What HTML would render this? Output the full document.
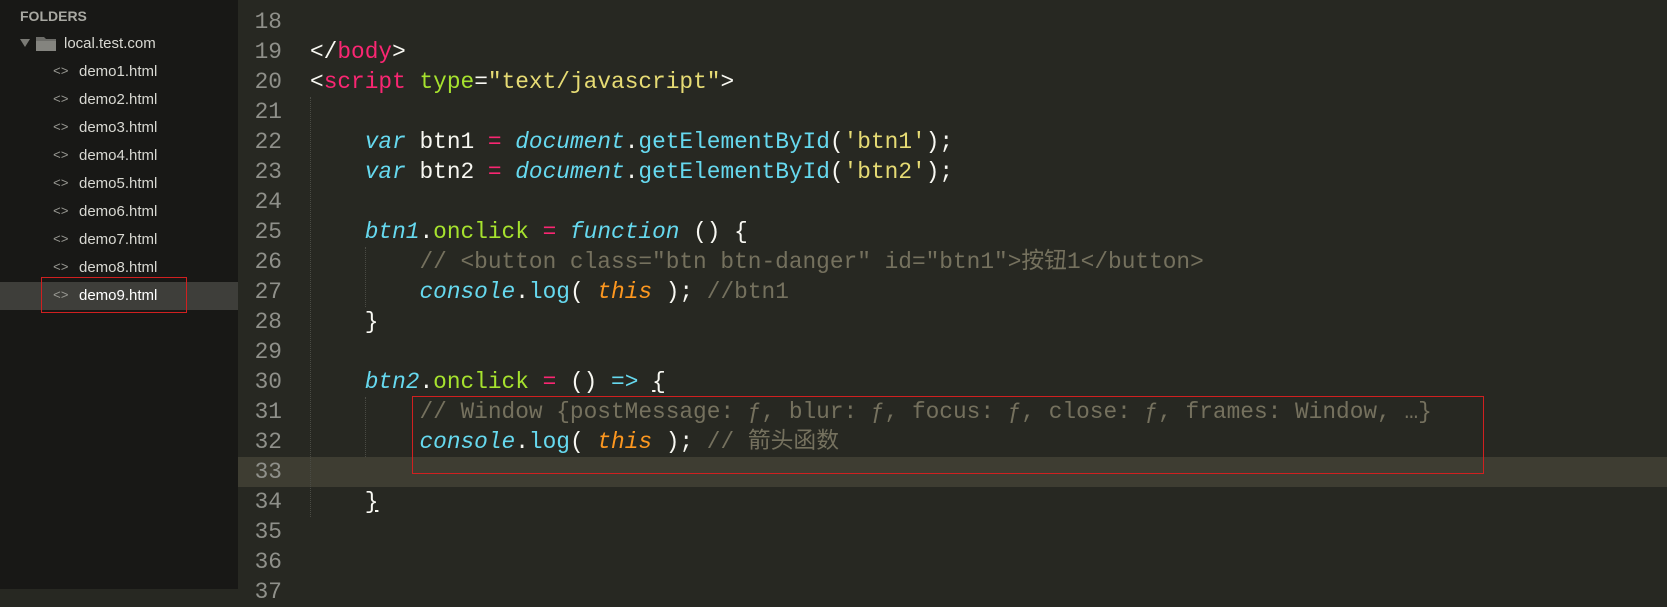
<!DOCTYPE html>
<html><head><meta charset="utf-8"><style>
*{margin:0;padding:0;box-sizing:border-box}
body{width:1667px;height:589px;overflow:hidden;background:#272822;position:relative;font-family:"Liberation Sans","Noto Sans CJK SC",sans-serif}
#side{position:absolute;left:0;top:0;width:238px;height:589px;background:#181816}
.si{position:absolute;color:#d8d8d2;font-size:15px;line-height:20px}
.ic{position:absolute;color:#9a9a94;font-size:13px;font-family:"Liberation Mono",monospace;line-height:20px}
#ed{position:absolute;left:238px;top:0;right:0;bottom:0}
.ln{position:absolute;left:0;width:44px;text-align:right;color:#8f908a;font:22.8px/30px "Liberation Mono","Noto Sans CJK SC",monospace}
.cl{position:absolute;left:72px;white-space:pre;color:#f8f8f2;font:22.8px/30px "Liberation Mono","Noto Sans CJK SC",monospace}
.p{color:#f92672}.g{color:#a6e22e}.y{color:#e6db74}.c{color:#66d9ef}.ci{color:#66d9ef;font-style:italic}.o{color:#fd971f;font-style:italic}.m{color:#75715e}
.u{text-decoration:underline}
.guide{position:absolute;border-left:1px dotted #4a4b44;width:0}
</style></head><body>
<div id="side">
<div class="si" style="left:20px;top:6px;font-weight:bold;color:#a8a8a2;font-size:14px">FOLDERS</div>
<svg style="position:absolute;left:19px;top:38px" width="12" height="10"><polygon points="1,1 11,1 6,9" fill="#7a7a75"/></svg>
<svg style="position:absolute;left:35px;top:35px" width="23" height="17"><path d="M1 2h8l2 2h10v12H1z" fill="#6d6d69"/><path d="M1 6h20v10H1z" fill="#84847f"/></svg>
<div class="si" style="left:64px;top:34px">local.test.com</div>
<div style="position:absolute;left:0;top:282px;width:238px;height:28px;background:#3e3e3a"></div>
<div style="position:absolute;left:41px;top:277px;width:146px;height:36px;border:1px solid #d02020"></div>
<div class="ic" style="left:53px;top:62px">&lt;&gt;</div><div class="si" style="left:79px;top:62px">demo1.html</div>
<div class="ic" style="left:53px;top:90px">&lt;&gt;</div><div class="si" style="left:79px;top:90px">demo2.html</div>
<div class="ic" style="left:53px;top:118px">&lt;&gt;</div><div class="si" style="left:79px;top:118px">demo3.html</div>
<div class="ic" style="left:53px;top:146px">&lt;&gt;</div><div class="si" style="left:79px;top:146px">demo4.html</div>
<div class="ic" style="left:53px;top:174px">&lt;&gt;</div><div class="si" style="left:79px;top:174px">demo5.html</div>
<div class="ic" style="left:53px;top:202px">&lt;&gt;</div><div class="si" style="left:79px;top:202px">demo6.html</div>
<div class="ic" style="left:53px;top:230px">&lt;&gt;</div><div class="si" style="left:79px;top:230px">demo7.html</div>
<div class="ic" style="left:53px;top:258px">&lt;&gt;</div><div class="si" style="left:79px;top:258px">demo8.html</div>
<div class="ic" style="left:53px;top:286px">&lt;&gt;</div><div class="si" style="left:79px;top:286px;color:#fff">demo9.html</div>
</div>
<div id="ed">
<div style="position:absolute;left:0;right:0;top:457px;height:30px;background:#3e3d32"></div>
<div class="guide" style="left:72px;top:97px;height:420px"></div>
<div class="guide" style="left:127px;top:247px;height:60px"></div>
<div class="guide" style="left:127px;top:397px;height:60px"></div>
<div class="ln" style="top:-23px">17</div>
<div class="ln" style="top:7px">18</div>
<div class="ln" style="top:37px">19</div><div class="cl" style="top:37px">&lt;/<span class="p">body</span>&gt;</div>
<div class="ln" style="top:67px">20</div><div class="cl" style="top:67px">&lt;<span class="p">script</span> <span class="g">type</span>=<span class="y">"text/javascript"</span>&gt;</div>
<div class="ln" style="top:97px">21</div>
<div class="ln" style="top:127px">22</div><div class="cl" style="top:127px">    <span class="ci">var</span> btn1 <span class="p">=</span> <span class="ci">document</span>.<span class="c">getElementById</span>(<span class="y">'btn1'</span>);</div>
<div class="ln" style="top:157px">23</div><div class="cl" style="top:157px">    <span class="ci">var</span> btn2 <span class="p">=</span> <span class="ci">document</span>.<span class="c">getElementById</span>(<span class="y">'btn2'</span>);</div>
<div class="ln" style="top:187px">24</div>
<div class="ln" style="top:217px">25</div><div class="cl" style="top:217px">    <span class="ci">btn1</span>.<span class="g">onclick</span> <span class="p">=</span> <span class="ci">function</span> () {</div>
<div class="ln" style="top:247px">26</div><div class="cl" style="top:247px">        <span class="m">// &lt;button class="btn btn-danger" id="btn1"&gt;按钮1&lt;/button&gt;</span></div>
<div class="ln" style="top:277px">27</div><div class="cl" style="top:277px">        <span class="ci">console</span>.<span class="c">log</span>( <span class="o">this</span> ); <span class="m">//btn1</span></div>
<div class="ln" style="top:307px">28</div><div class="cl" style="top:307px">    }</div>
<div class="ln" style="top:337px">29</div>
<div class="ln" style="top:367px">30</div><div class="cl" style="top:367px">    <span class="ci">btn2</span>.<span class="g">onclick</span> <span class="p">=</span> () <span class="c">=&gt;</span> <span class="u">{</span></div>
<div class="ln" style="top:397px">31</div><div class="cl" style="top:397px">        <span class="m">// Window {postMessage: ƒ, blur: ƒ, focus: ƒ, close: ƒ, frames: Window, …}</span></div>
<div class="ln" style="top:427px">32</div><div class="cl" style="top:427px">        <span class="ci">console</span>.<span class="c">log</span>( <span class="o">this</span> ); <span class="m">// 箭头函数</span></div>
<div class="ln" style="top:457px">33</div>
<div class="ln" style="top:487px">34</div><div class="cl" style="top:487px">    <span class="u">}</span></div>
<div class="ln" style="top:517px">35</div>
<div class="ln" style="top:547px">36</div>
<div class="ln" style="top:577px">37</div>
<div style="position:absolute;left:174px;top:396px;width:1072px;height:78px;border:1px solid #d02020"></div>
</div>
</body></html>
